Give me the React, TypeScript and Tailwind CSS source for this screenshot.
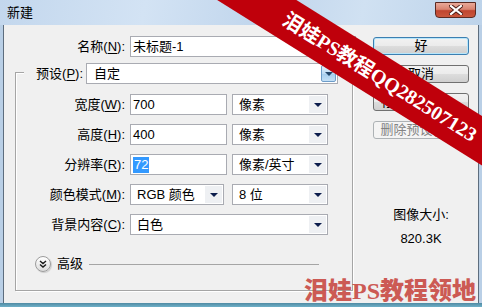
import React from "react";

function Key({ text, k }: { text: string; k: string }) {
  return (
    <span>
      {text}(<span className="underline underline-offset-[2px]">{k}</span>):
    </span>
  );
}

function Arrow() {
  return (
    <div className="w-[17px] self-stretch my-[1px] mr-[1px] flex items-center justify-center bg-[#eef0f3]">
      <svg width="8" height="4" viewBox="0 0 8 4">
        <path d="M0 0H8L4 4Z" fill="#0c1d4d" />
      </svg>
    </div>
  );
}

function Select({ w, children }: { w: string; children: React.ReactNode }) {
  return (
    <div className={`${w} h-[21px] flex items-stretch border border-[#a9abb2] bg-white`}>
      <div className="flex-1 flex items-center pl-[6px]">{children}</div>
      <Arrow />
    </div>
  );
}

function Input({ w, children }: { w: string; children: React.ReactNode }) {
  return (
    <div className={`${w} h-[21px] flex items-center border border-[#a9abb2] bg-white pl-[2px]`}>{children}</div>
  );
}

function Row({ text, k, children }: { text: string; k: string; children: React.ReactNode }) {
  return (
    <div className="flex items-center h-[21px]">
      <div className="w-[109px] text-right">
        <Key text={text} k={k} />
      </div>
      <div className="ml-[5px] flex gap-[5px]">{children}</div>
    </div>
  );
}

function Btn({ children, focus, disabled }: { children: React.ReactNode; focus?: boolean; disabled?: boolean }) {
  if (disabled) {
    return (
      <div className="w-[96px] h-[18px] rounded-[3px] border border-[#adb2b5] bg-[#f4f4f4] text-[#838383] flex items-center justify-center">
        {children}
      </div>
    );
  }
  return (
    <div
      className={`w-[96px] h-[18px] rounded-[3px] border flex items-center justify-center bg-[linear-gradient(#f2f2f2_0%,#ebebeb_50%,#dddddd_50%,#cfcfcf_100%)] ${
        focus ? "border-[#3c7fb1] shadow-[inset_0_0_0_1px_#b7e6fb]" : "border-[#707070]"
      }`}
    >
      {children}
    </div>
  );
}

export default function App() {
  return (
    <div className="relative w-[482px] h-[307px] overflow-hidden bg-[#b9cfe6] text-[13px] text-black font-['Liberation_Sans','Noto_Sans_CJK_SC',sans-serif]">
      {/* title bar */}
      <div className="h-[25px] flex justify-between pl-[7px] pr-[6px] bg-[linear-gradient(100deg,#c3d7ed_0%,#d3e3f4_30%,#c0d5ec_55%,#d0e1f2_75%,#bdd3ea_100%)]">
        <span className="mt-[5px] leading-[16px]">新建</span>
        <div className="mt-[2px] w-[41px] h-[16px] rounded-b-[4px] border border-[#5b2a22] flex items-center justify-center bg-[linear-gradient(#e9a999_0%,#d98471_45%,#c0452f_55%,#c9573d_100%)]">
          <svg width="14" height="10" viewBox="0 0 14 10">
            <path d="M2 1L12 9M12 1L2 9" stroke="#4a1a14" strokeWidth="4" strokeLinecap="square" />
            <path d="M2 1L12 9M12 1L2 9" stroke="#ffffff" strokeWidth="2.2" strokeLinecap="square" />
          </svg>
        </div>
      </div>

      {/* window body */}
      <div className="mx-[3px] h-[278px] border-x border-[#5d6d7e] bg-[#f0f0f0] flex">
        {/* left column */}
        <div className="w-[352px] pl-[11px] pt-[11px] flex flex-col">
          <div className="flex items-center h-[21px]">
            <div className="w-[110px] text-right">
              <Key text="名称" k="N" />
            </div>
            <div className="ml-[5px]">
              <Input w="w-[226px]">未标题-1</Input>
            </div>
          </div>

          <div className="mt-[15px] w-[338px] h-[219px] border border-[#a5a5a5] shadow-[inset_1px_1px_0_#fff,1px_1px_0_#fff] flex flex-col">
            <div className="-mt-[10px] ml-[8px] flex items-center h-[21px]">
              <div className="w-[62px] text-right pr-[3px] bg-[#f0f0f0]">
                <Key text="预设" k="P" />
              </div>
              <div className="w-[252px] h-[21px] flex items-stretch border border-[#a9abb2] bg-white">
                <div className="flex-1 flex items-center pl-[7px]">自定</div>
                <div className="w-[15px] my-[1px] mr-[1px] border border-[#6d9cc8] rounded-[2px] flex items-center justify-center bg-[linear-gradient(#e3f0fb_0%,#bddbf4_50%,#a5cdee_51%,#c4e0f6_100%)]">
                  <svg width="8" height="4" viewBox="0 0 8 4">
                    <path d="M0 0H8L4 4Z" fill="#23466b" />
                  </svg>
                </div>
              </div>
            </div>

            <div className="mt-[10px] flex flex-col gap-[9px]">
              <Row text="宽度" k="W">
                <Input w="w-[97px]">700</Input>
                <Select w="w-[96px]">像素</Select>
              </Row>
              <Row text="高度" k="H">
                <Input w="w-[97px]">400</Input>
                <Select w="w-[96px]">像素</Select>
              </Row>
              <Row text="分辨率" k="R">
                <Input w="w-[97px]">
                  <span className="bg-[#3399ff] text-white leading-[16px] px-[1px]">72</span>
                </Input>
                <Select w="w-[96px]">像素/英寸</Select>
              </Row>
              <Row text="颜色模式" k="M">
                <Select w="w-[94px]">RGB 颜色</Select>
                <div className="ml-[3px]">
                  <Select w="w-[96px]">8 位</Select>
                </div>
              </Row>
              <Row text="背景内容" k="C">
                <Select w="w-[198px]">白色</Select>
              </Row>
            </div>

            <div className="mt-[21px] ml-[19px] mr-[33px] h-[16px] flex items-center">
              <div className="w-[16px] h-[16px] rounded-full border border-[#9c9c9c] bg-[linear-gradient(#ffffff,#dcdcdc)] shadow-[1px_1px_1px_rgba(0,0,0,0.15)] flex items-center justify-center">
                <svg width="8" height="8" viewBox="0 0 8 8">
                  <path d="M1 1L4 3.5L7 1M1 4.5L4 7L7 4.5" stroke="#1a1a1a" strokeWidth="1.4" fill="none" />
                </svg>
              </div>
              <span className="ml-[6px]">高级</span>
              <div className="ml-[6px] flex-1 h-px bg-[#a5a5a5]" />
            </div>
          </div>
        </div>

        {/* right column */}
        <div className="ml-[17px] pt-[12px] flex flex-col items-center w-[96px]">
          <div className="flex flex-col gap-[10px]">
            <Btn focus>好</Btn>
            <Btn>取消</Btn>
            <Btn>存储预设(S)...</Btn>
            <Btn disabled>删除预设(D)...</Btn>
          </div>
          <div className="mt-[68px] leading-[16px]">图像大小:</div>
          <div className="mt-[8px] leading-[16px]">820.3K</div>
        </div>
      </div>
      <div className="h-[4px] bg-[linear-gradient(#4f8aa3,#6fb0c8)]" />

      {/* watermark band */}
      <div className="absolute left-[150px] top-[56px] w-[460px] h-[42px] rotate-[32deg] bg-[#bf000b] flex items-center justify-center">
        <span className="text-white text-[20px] font-bold leading-none font-['Liberation_Serif','Noto_Sans_CJK_SC',serif]">
          泪娃PS教程QQ282507123
        </span>
      </div>

      {/* watermark bottom */}
      <div className="absolute left-[304px] top-[278px] text-[24px] leading-[26px] font-black text-[#c94a44] opacity-90 font-['Liberation_Serif','Noto_Sans_CJK_SC',serif]">
        泪娃PS教程领地
      </div>
    </div>
  );
}
